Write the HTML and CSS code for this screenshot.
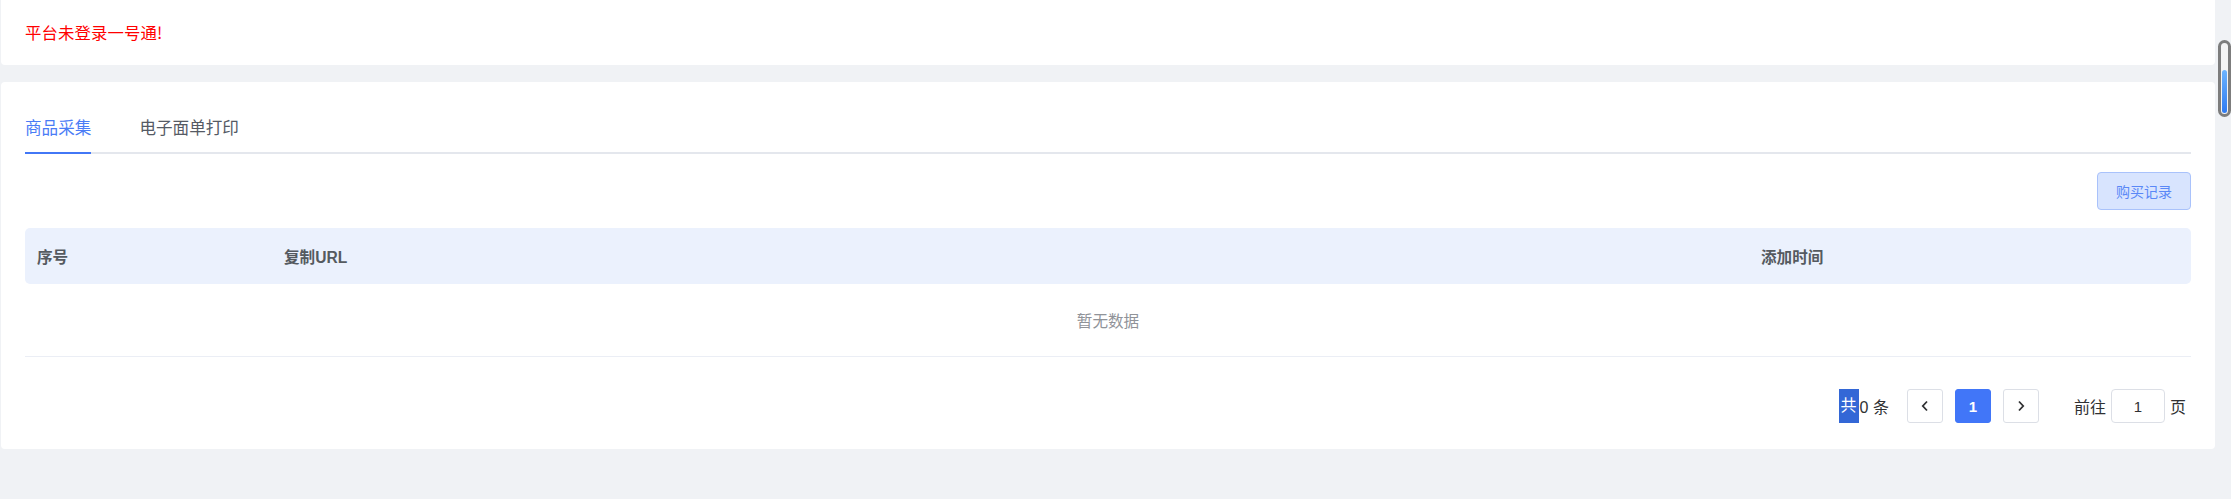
FILE: index.html
```html
<!DOCTYPE html>
<html lang="zh-CN">
<head>
<meta charset="utf-8">
<title>商品采集</title>
<link rel="stylesheet" href="styles.css">
</head>
<body>
<div class="page">
  <div class="main">
    <div class="card notice">
      <span class="notice-text">平台未登录一号通!</span>
    </div>
    <div class="card content">
      <div class="tabs">
        <div class="tab active">商品采集</div>
        <div class="tab">电子面单打印</div>
      </div>
      <div class="toolbar">
        <button class="btn-light">购买记录</button>
      </div>
      <div class="table">
        <div class="thead">
          <div class="th">序号</div>
          <div class="th">复制URL</div>
          <div class="th">添加时间</div>
        </div>
        <div class="empty">暂无数据</div>
      </div>
      <div class="pager">
        <span class="total"><span class="sel">共</span>0 条</span>
        <button class="pbtn prev" aria-label="上一页">
          <svg width="8" height="12" viewBox="0 0 8 12"><path d="M6 1.5 L1.8 6 L6 10.5" fill="none" stroke="#303133" stroke-width="1.8"/></svg>
        </button>
        <button class="pbtn current">1</button>
        <button class="pbtn next" aria-label="下一页">
          <svg width="8" height="12" viewBox="0 0 8 12"><path d="M2 1.5 L6.2 6 L2 10.5" fill="none" stroke="#303133" stroke-width="1.8"/></svg>
        </button>
        <span class="jump">前往</span>
        <span class="jump-input">1</span>
        <span class="jump-end">页</span>
      </div>
    </div>
  </div>
  <div class="scrollbar">
    <div class="thumb"><div class="thumb-fill"></div></div>
  </div>
</div>
</body>
</html>
```

FILE: styles.css
```css
* { box-sizing: border-box; }
html, body {
  margin: 0;
  height: 100%;
  overflow: hidden;
}
body {
  background: #f0f2f5;
  font-family: "Liberation Sans", "Noto Sans CJK SC", sans-serif;
  color: #303133;
}
.page {
  display: flex;
  height: 499px;
}
.main {
  flex: 1;
  padding-left: 1px;
}
.card {
  background: #fff;
  border-radius: 4px;
}
.notice {
  height: 65px;
  padding: 0 24px 2px;
  display: flex;
  align-items: center;
  border-radius: 0 0 4px 4px;
}
.notice-text {
  color: #ff0000;
  font-size: 16.4px;
  font-family: "Noto Sans CJK SC", sans-serif;
  letter-spacing: 0.1px;
}
.content {
  margin-top: 17px;
  padding: 24px 24px 26px;
}
.tabs {
  display: flex;
  border-bottom: 2px solid #e4e7ed;
}
.tab {
  height: 48px;
  line-height: 46px;
  font-size: 16.6px;
  color: #555a64;
  margin-bottom: -2px;
  border-bottom: 2px solid transparent;
}
.tab + .tab { margin-left: 48px; }
.tab.active {
  color: #4a7cf6;
  border-bottom-color: #4277f6;
}
.toolbar {
  margin-top: 18px;
  display: flex;
  justify-content: flex-end;
}
.btn-light {
  height: 38px;
  width: 94px;
  padding: 0;
  border: 1px solid #a9c2fb;
  background: #d8e4fe;
  color: #5a88f7;
  border-radius: 4px;
  font-family: inherit;
  font-size: 14px;
}
.table { margin-top: 18px; }
.thead {
  display: grid;
  grid-template-columns: 247px 1fr 442px;
  height: 56px;
  align-items: center;
  background: #ebf1fd;
  border-radius: 5px;
}
.th {
  padding: 0 12px;
  font-size: 15.6px;
  font-weight: bold;
  color: #555a60;
}
.empty {
  height: 73px;
  border-bottom: 1px solid #ebeef5;
  display: flex;
  align-items: center;
  justify-content: center;
  font-size: 15.6px;
  color: #909399;
  padding-bottom: 1px;
}
.pager {
  margin-top: 32px;
  height: 34px;
  display: flex;
  align-items: center;
  justify-content: flex-end;
  padding-right: 5px;
  font-size: 16px;
  color: #303133;
}
.total {
  display: flex;
  align-items: center;
  height: 34px;
}
.sel {
  background: #3367d6;
  color: #fff;
  height: 34px;
  line-height: 34px;
  padding: 0 2px;
  margin-right: 1px;
}
.pbtn {
  width: 36px;
  height: 34px;
  padding: 0;
  margin-left: 12px;
  border: 1px solid #dcdfe6;
  border-radius: 3px;
  background: #fff;
  display: flex;
  align-items: center;
  justify-content: center;
  font-family: inherit;
  font-size: 15px;
}
.pbtn.prev { margin-left: 18px; }
.pbtn.current {
  background: #4176f8;
  border-color: #4176f8;
  color: #fff;
  font-weight: bold;
}
.jump { margin-left: 35px; }
.jump-input {
  width: 54px;
  height: 34px;
  margin: 0 5px;
  border: 1px solid #dcdfe6;
  border-radius: 4px;
  display: flex;
  align-items: center;
  justify-content: center;
  font-size: 15px;
}
.scrollbar {
  width: 16px;
  padding-top: 40px;
  padding-left: 3px;
}
.thumb {
  width: 13px;
  height: 77px;
  border: 3px solid #7d7d7d;
  border-radius: 7px;
  background: #f4f4f4;
  display: flex;
  flex-direction: column;
  justify-content: flex-end;
  align-items: center;
  padding-bottom: 1px;
}
.thumb-fill {
  width: 5px;
  height: 43px;
  border-radius: 3px;
  background: linear-gradient(#6cb4ff, #2f7bf2);
}
```
